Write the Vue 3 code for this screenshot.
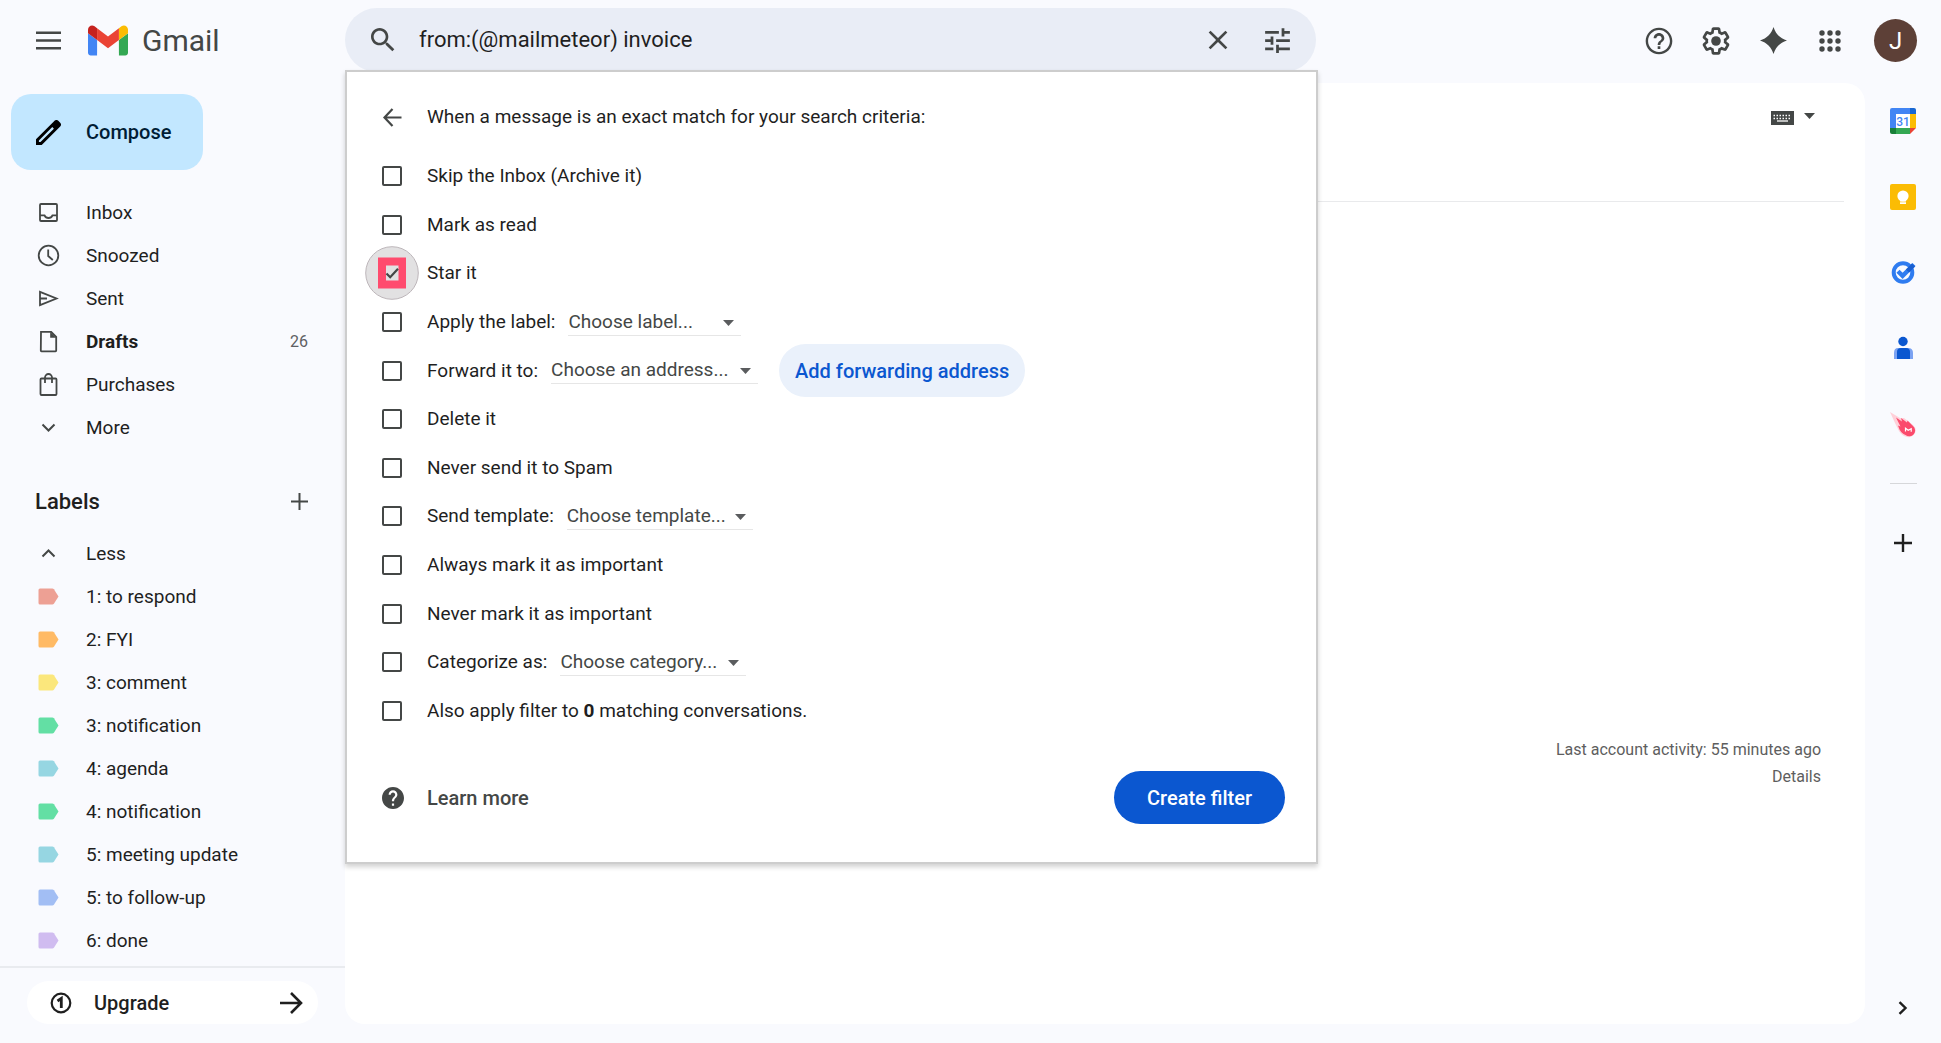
<script setup>
import { ref } from 'vue'

const query = ref('from:(@mailmeteor) invoice')

const folders = [
  { name: 'Inbox', icon: 'inbox' },
  { name: 'Snoozed', icon: 'clock' },
  { name: 'Sent', icon: 'sent' },
  { name: 'Drafts', icon: 'draft', count: 26 },
  { name: 'Purchases', icon: 'bag' },
  { name: 'More', icon: 'down' },
]

const labels = [
  { name: '1: to respond', color: '#eda094' },
  { name: '2: FYI', color: '#ffba65' },
  { name: '3: comment', color: '#fbe77c' },
  { name: '3: notification', color: '#63dfa4' },
  { name: '4: agenda', color: '#96d6e2' },
  { name: '4: notification', color: '#63dfa4' },
  { name: '5: meeting update', color: '#96d6e2' },
  { name: '5: to follow-up', color: '#a2bef4' },
  { name: '6: done', color: '#d0bcf0' },
]

const actions = ref([
  { id: 'archive', text: 'Skip the Inbox (Archive it)', on: false },
  { id: 'read', text: 'Mark as read', on: false },
  { id: 'star', text: 'Star it', on: true },
  { id: 'label', text: 'Apply the label:', choice: 'Choose label...', size: 'small', on: false },
  { id: 'forward', text: 'Forward it to:', choice: 'Choose an address...', size: 'large', on: false },
  { id: 'delete', text: 'Delete it', on: false },
  { id: 'spam', text: 'Never send it to Spam', on: false },
  { id: 'template', text: 'Send template:', choice: 'Choose template...', size: 'medium', on: false },
  { id: 'important', text: 'Always mark it as important', on: false },
  { id: 'unimportant', text: 'Never mark it as important', on: false },
  { id: 'category', text: 'Categorize as:', choice: 'Choose category...', size: 'medium', on: false },
  { id: 'apply', text: 'Also apply filter to ', on: false },
])
</script>

<template>
  <div class="app">
    <header class="top">
      <div class="brand">
        <button class="plain" aria-label="Main menu">
          <svg width="25" height="25" viewBox="0 0 25 25" stroke="#444746" stroke-width="2.6"><path d="M0 4.7h25M0 12.5h25M0 20.3h25" /></svg>
        </button>
        <a class="logo" href="#">
          <svg width="40" height="31" viewBox="52 42 88 66">
            <path fill="#4285f4" d="M58 108h14V74L52 59v43c0 3.32 2.69 6 6 6" />
            <path fill="#34a853" d="M120 108h14c3.32 0 6-2.69 6-6V59l-20 15" />
            <path fill="#fbbc04" d="M120 48v26l20-15v-8c0-7.42-8.47-11.65-14.4-7.2" />
            <path fill="#ea4335" d="M72 74V48l24 18 24-18v26L96 92" />
            <path fill="#c5221f" d="M52 51v8l20 15V48l-5.6-4.2c-5.94-4.45-14.4-.22-14.4 7.2" />
          </svg>
          <span>Gmail</span>
        </a>
      </div>

      <div class="search-area">
        <form class="search" @submit.prevent>
          <button class="plain" aria-label="Search">
            <svg width="32" height="32" viewBox="0 0 24 24" fill="#444746"><path d="M15.5 14h-.79l-.28-.27C15.41 12.59 16 11.11 16 9.5 16 5.91 13.09 3 9.5 3S3 5.91 3 9.5 5.91 16 9.5 16c1.61 0 3.09-.59 4.23-1.57l.27.28v.79l5 4.99L20.49 19l-4.99-5zm-6 0C7.01 14 5 11.99 5 9.5S7.01 5 9.5 5 14 7.01 14 9.5 11.99 14 9.5 14z" /></svg>
          </button>
          <input v-model="query" type="text" aria-label="Search mail" />
          <button class="plain" type="button" aria-label="Clear search">
            <svg width="32" height="32" viewBox="0 0 24 24" fill="#444746"><path d="M19 6.41 17.59 5 12 10.59 6.41 5 5 6.41 10.59 12 5 17.59 6.41 19 12 13.41 17.59 19 19 17.59 13.41 12z" /></svg>
          </button>
          <button class="plain" type="button" aria-label="Show search options">
            <svg width="33" height="33" viewBox="0 0 24 24" fill="#444746"><path d="M3 17v2h6v-2H3zM3 5v2h10V5H3zm10 16v-2h8v-2h-8v-2h-2v6h2zM7 9v2H3v2h4v2h2V9H7zm14 4v-2H11v2h10zm-6-4h2V7h4V5h-4V3h-2v6z" /></svg>
          </button>
        </form>

        <section class="panel">
          <div class="panel-head">
            <button class="plain" aria-label="Back">
              <svg width="21" height="21" viewBox="0 0 21 21" fill="none" stroke="#444746" stroke-width="2.2"><path d="M19.5 10.5H3M10.5 2 2.5 10.5 10.5 19" /></svg>
            </button>
            <span>When a message is an exact match for your search criteria:</span>
          </div>

          <div class="actions">
            <div v-for="a in actions" :key="a.id" class="action">
              <span class="tick">
                <input :id="a.id" v-model="a.on" type="checkbox" />
                <svg v-if="a.on" class="ring" width="54" height="54" viewBox="0 0 54 54">
                  <circle cx="27" cy="27" r="26.3" fill="#e2e1e2" stroke="#bdb6ba" />
                  <path fill="#ff4b6e" d="M13 11.5h28v31H13z" />
                  <path fill="#e2e1e2" d="M21 19.5h12.5v15H21z" />
                  <path d="m21.5 27.5 3.7 3.7 7.8-8.4" fill="none" stroke="#444746" stroke-width="2.2" />
                </svg>
              </span>
              <label :for="a.id">{{ a.text }}<template v-if="a.id === 'apply'"><b>0</b> matching conversations.</template></label>
              <span v-if="a.choice" class="choice" :class="a.size">
                <select :aria-label="a.text"><option>{{ a.choice }}</option></select>
                <svg width="11" height="6" viewBox="0 0 11 6" fill="#5a5c5e"><path d="M0 0h11L5.5 6z" /></svg>
              </span>
              <button v-if="a.id === 'forward'" class="pill tonal">Add forwarding address</button>
            </div>
          </div>

          <div class="panel-foot">
            <svg width="22" height="22" viewBox="2 2 20 20" fill="#444746"><path d="M12 2C6.48 2 2 6.48 2 12s4.48 10 10 10 10-4.48 10-10S17.52 2 12 2zm1 17h-2v-2h2v2zm2.07-7.75-.9.92C13.45 12.9 13 13.5 13 15h-2v-.5c0-1.1.45-2.1 1.17-2.83l1.24-1.26c.37-.36.59-.86.59-1.41 0-1.1-.9-2-2-2s-2 .9-2 2H8c0-2.21 1.79-4 4-4s4 1.79 4 4c0 .88-.36 1.68-.93 2.25z" /></svg>
            <a href="#">Learn more</a>
            <button class="pill filled">Create filter</button>
          </div>
        </section>
      </div>

      <div class="tools">
        <button class="plain" aria-label="Support">
          <svg width="32" height="32" viewBox="0 0 24 24" fill="#444746"><path d="M11 18h2v-2h-2v2zm1-16C6.48 2 2 6.48 2 12s4.48 10 10 10 10-4.48 10-10S17.52 2 12 2zm0 18.2c-4.5 0-8.2-3.7-8.2-8.2S7.5 3.8 12 3.8s8.2 3.7 8.2 8.2-3.7 8.2-8.2 8.2zM12 6c-2.21 0-4 1.79-4 4h2c0-1.1.9-2 2-2s2 .9 2 2c0 2-3 1.75-3 5h2c0-2.25 3-2.5 3-5 0-2.21-1.79-4-4-4z" /></svg>
        </button>
        <button class="plain" aria-label="Settings">
          <svg width="32" height="32" viewBox="0 0 24 24" fill="#444746"><path d="M13.85 22.25h-3.7c-.74 0-1.36-.54-1.45-1.27l-.27-1.89c-.27-.14-.53-.29-.79-.46l-1.8.72c-.7.26-1.47-.03-1.81-.65L2.2 15.53c-.35-.66-.2-1.44.36-1.88l1.53-1.19c-.01-.15-.02-.3-.02-.46 0-.15.01-.31.02-.46l-1.52-1.19c-.59-.45-.74-1.26-.37-1.88l1.85-3.19c.34-.62 1.11-.9 1.79-.63l1.81.73c.26-.17.52-.32.78-.46l.27-1.91c.09-.7.71-1.25 1.44-1.25h3.7c.74 0 1.36.54 1.45 1.27l.27 1.89c.27.14.53.29.79.46l1.8-.72c.71-.26 1.48.03 1.82.65l1.84 3.18c.36.66.2 1.44-.36 1.88l-1.52 1.19c.01.15.02.3.02.46s-.01.31-.02.46l1.52 1.19c.56.45.72 1.23.37 1.86l-1.86 3.22c-.34.62-1.11.9-1.8.63l-1.8-.72c-.26.17-.52.32-.78.46l-.27 1.91c-.1.68-.72 1.22-1.46 1.22zm-3.23-2h2.76l.37-2.55.53-.22c.44-.18.88-.44 1.34-.78l.45-.34 2.38.96 1.38-2.4-2.03-1.58.07-.56c.03-.26.06-.51.06-.78s-.03-.53-.06-.78l-.07-.56 2.03-1.58-1.39-2.4-2.39.96-.45-.35c-.42-.32-.87-.58-1.33-.77l-.52-.22-.37-2.55h-2.76l-.37 2.55-.53.21c-.44.19-.88.44-1.34.79l-.45.33-2.38-.95-1.39 2.39 2.03 1.58-.07.56a7 7 0 0 0-.06.79c0 .26.02.53.06.78l.07.56-2.03 1.58 1.38 2.4 2.39-.96.45.35c.43.33.86.58 1.33.77l.53.22.38 2.55z" /><circle cx="12" cy="12" r="3.6" /></svg>
        </button>
        <button class="plain" aria-label="Gemini">
          <svg width="27" height="27" viewBox="0 0 27 27" fill="#444746"><path d="M13.5 0C15.7 7 20 11.3 27 13.5 20 15.7 15.7 20 13.5 27 11.3 20 7 15.7 0 13.5 7 11.3 11.3 7 13.5 0z" /></svg>
        </button>
        <button class="plain" aria-label="Google apps">
          <svg width="22" height="22" viewBox="0 0 22 22" fill="#444746">
            <template v-for="y in 3" :key="y"><circle v-for="x in 3" :key="x" :cx="x * 8 - 5" :cy="y * 8 - 5" r="2.7" /></template>
          </svg>
        </button>
        <button class="avatar" aria-label="Account">J</button>
      </div>
    </header>

    <div class="body">
      <aside class="side">
        <button class="compose">
          <svg width="25" height="25" viewBox="0 0 25 25"><path fill-rule="evenodd" d="M0 19.3 17.6 1.7l.9-.9c1.1-1.1 2.7-1.1 3.8 0l1.9 1.9c1.1 1.1 1.1 2.7 0 3.8L5.7 25H0zM2.9 20.5v1.6h1.6L17.9 8.7l-1.6-1.6z" /></svg>
          <span>Compose</span>
        </button>

        <nav class="folders" aria-label="Mailboxes">
          <a v-for="f in folders" :key="f.name" href="#" class="item" :class="{ strong: f.count }">
            <svg width="25" height="25" viewBox="0 0 25 25" fill="none" stroke="#444746" stroke-width="1.8">
              <template v-if="f.icon === 'inbox'"><rect x="4" y="4" width="17" height="17" rx="1" /><path d="M4 15.3h4.5c.8 1.8 2 2.7 4 2.7s3.2-.9 4-2.7H21" /></template>
              <template v-else-if="f.icon === 'clock'"><circle cx="12.5" cy="12.5" r="9.8" /><path d="M12.2 6.5V13l4.6 4" /></template>
              <path v-else-if="f.icon === 'sent'" d="M4 5.8 20.5 12.5 4 19.2zM4 12.5h7" />
              <template v-else-if="f.icon === 'draft'"><path d="M5 2.8h10.2l5 5V21.6q0 .7-.7.7h-14q-.7 0-.7-.7z" /><path d="M14.2 2.8v6h6z" fill="#444746" stroke="none" /></template>
              <template v-else-if="f.icon === 'bag'"><rect x="4.5" y="6.5" width="16" height="16.5" rx="1" /><path d="M9 11V5.5a3.5 3.5 0 0 1 7 0V11" /></template>
              <path v-else d="m6.5 9.5 6 6 6-6" stroke-width="2" />
            </svg>
            <span>{{ f.name }}</span>
            <span v-if="f.count" class="count">{{ f.count }}</span>
          </a>
        </nav>

        <div class="labels-head">
          <h2>Labels</h2>
          <button class="plain" aria-label="Create new label">
            <svg width="17" height="17" viewBox="0 0 17 17" stroke="#444746" stroke-width="2"><path d="M8.5 0v17M0 8.5h17" /></svg>
          </button>
        </div>

        <nav aria-label="Labels">
          <a href="#" class="item">
            <svg width="25" height="25" viewBox="0 0 25 25" fill="none" stroke="#444746" stroke-width="2"><path d="m6.5 15.5 6-6 6 6" /></svg>
            <span>Less</span>
          </a>
          <a v-for="l in labels" :key="l.name" href="#" class="item">
            <svg width="25" height="25" viewBox="0 0 25 25" :fill="l.color"><path d="M4 4.5h12.3q1 0 1.6.8l4.6 7.2-4.6 7.2q-.6.8-1.6.8H4q-1.5 0-1.5-1.5V6q0-1.5 1.5-1.5z" /></svg>
            <span>{{ l.name }}</span>
          </a>
        </nav>

        <div class="upgrade-area">
          <button class="upgrade">
            <svg width="22" height="22" viewBox="0 0 22 22" fill="none" stroke="#1f1f1f"><circle cx="11" cy="11" r="9.3" stroke-width="2.2" /><path d="m7.5 9 3.8-2.6V16" stroke-width="2.8" /></svg>
            <span>Upgrade</span>
            <svg width="23" height="22" viewBox="0 0 23 22" fill="none" stroke="#1f1f1f" stroke-width="2.6"><path d="M0 11h21M11 1l10 10-10 10" /></svg>
          </button>
        </div>
      </aside>

      <main class="mail">
        <div class="toolbar">
          <button class="plain keyboard" aria-label="Select input tool">
            <svg width="23" height="14" viewBox="0 0 23 14"><path fill="#444746" d="M0 0h23v14H0z" /><path d="M2.5 4.5h18M2.5 7.5h18" stroke="#fff" stroke-width="1.3" stroke-dasharray="1.5 1.5" /><path d="M6 10h11" stroke="#fff" stroke-width="1.3" /></svg>
            <svg class="caret" width="11" height="6" viewBox="0 0 11 6" fill="#444746"><path d="M0 0h11L5.5 6z" /></svg>
          </button>
        </div>
        <footer class="activity">
          <span>Last account activity: 55 minutes ago</span>
          <a href="#">Details</a>
        </footer>
      </main>

      <aside class="rail">
        <button class="plain" aria-label="Calendar">
          <svg width="26" height="26" viewBox="0 0 26 26">
            <path fill="#4285f4" d="M2 0h18v6H6v14H0V2q0-2 2-2z" /><path fill="#1967d2" d="M20 0h4q2 0 2 2v4h-6z" />
            <path fill="#fbbc04" d="M20 6h6v14h-6z" /><path fill="#34a853" d="M6 20h14v6H6z" />
            <path fill="#188038" d="M0 20h6v6H2q-2 0-2-2z" /><path fill="#ea4335" d="M20 20h6l-6 6z" /><path fill="#fff" d="M6 6h14v14H6z" />
            <text x="13" y="17.5" text-anchor="middle" font-size="12" font-weight="500" fill="#4285f4">31</text>
          </svg>
        </button>
        <button class="plain" aria-label="Keep">
          <svg width="26" height="26" viewBox="0 0 26 26"><rect width="26" height="26" rx="2" fill="#fbbc04" /><circle cx="13" cy="12" r="5.6" fill="#fff" /><path fill="#fff" d="M10 15h6v2.5h-6zM10 18.3h6v1.7h-6z" /></svg>
        </button>
        <button class="plain" aria-label="Tasks">
          <svg width="26" height="26" viewBox="0 0 26 26" fill="none"><circle cx="13" cy="12.5" r="9.3" stroke="#2f7cf0" stroke-width="4" /><path d="m8 11.3 4.6 4.6L24 4.5" stroke="#2f7cf0" stroke-width="4.4" /><path d="m17.5 11 6-6" stroke="#1a5fd0" stroke-width="4.4" /></svg>
        </button>
        <button class="plain" aria-label="Contacts">
          <svg width="26" height="26" viewBox="0 0 26 26"><circle cx="13" cy="5.5" r="4.7" fill="#0b57d0" /><path fill="#7ba2f2" d="M8 12h10q5 0 5 5v6H4v-6q0-5 4-5z" /><path fill="#0b57d0" d="M11 12h5q4 0 4 4v7H7v-7q0-4 4-4z" /></svg>
        </button>
        <button class="plain" aria-label="Mailmeteor">
          <svg width="26" height="26" viewBox="0 0 26 26"><path fill="#ffd0d9" d="M0 0 10 6l4 0 9 7q4 4 2 8-3 5-8 4-5-1-8-6L5 11z" /><path fill="#fb4a6c" d="M6 5.5l6 4-1-3.5 6 4.5.5-2 5.5 5.5a5.8 5.8 0 0 1-7.500 9c-3-1-4.5-3-6-5.500l-1.500-4 2.500 1z" /><path d="M15.5 19.5v-3.3l2.7 2 3-1.5v3" fill="none" stroke="#fff" stroke-width="1.2" /></svg>
        </button>
        <hr />
        <button class="plain" aria-label="Get add-ons">
          <svg width="18" height="18" viewBox="0 0 18 18" stroke="#1f1f1f" stroke-width="2.4"><path d="M9 0v18M0 9h18" /></svg>
        </button>
        <button class="plain last" aria-label="Hide side panel">
          <svg width="10" height="14" viewBox="0 0 10 14" fill="none" stroke="#1f1f1f" stroke-width="2.4"><path d="m1.5 1.2 6 5.800-6 5.800" /></svg>
        </button>
      </aside>
    </div>
  </div>
</template>

<style>
body {
  margin: 0;
  background: #f9fafe;
}
</style>

<style scoped>
.app {
  display: flex;
  flex-direction: column;
  min-height: 100vh;
  background: #f9fafe;
  color: #1f1f1f;
  font-family: Roboto, "Liberation Sans", sans-serif;
  font-size: 19px;
  line-height: 24px;
}
.app *,
.app *::before {
  box-sizing: border-box;
}
svg {
  display: block;
  flex: none;
}
button,
input,
select {
  font: inherit;
  color: inherit;
}
button {
  cursor: pointer;
}
a {
  color: inherit;
  text-decoration: none;
}
.plain {
  display: flex;
  align-items: center;
  justify-content: center;
  padding: 0;
  border: 0;
  background: none;
}

/* header */
.top {
  display: flex;
  height: 83px;
}
.brand {
  display: flex;
  align-items: center;
  gap: 27px;
  flex: none;
  width: 345px;
  height: 81px;
  padding-left: 36px;
}
.logo {
  display: flex;
  align-items: center;
  gap: 14px;
  color: #444746;
  font-size: 30px;
  line-height: 36px;
}
.search-area {
  position: relative;
  flex: 0 1 971px;
  padding-top: 8px;
}
.search {
  display: flex;
  align-items: center;
  height: 64px;
  padding: 0 22px;
  border-radius: 32px;
  background: #e9edf6;
}
.search input {
  flex: 1;
  min-width: 0;
  margin: 0 20px;
  padding: 0;
  border: 0;
  outline: 0;
  background: none;
  font-size: 22px;
}
.search .plain + .plain {
  margin-left: 27px;
}
.tools {
  display: flex;
  align-items: center;
  gap: 25px;
  height: 81px;
  margin-left: auto;
  padding: 0 24px 0 32px;
}
.tools .plain {
  width: 32px;
}
.avatar {
  width: 43px;
  height: 43px;
  margin-left: 3px;
  padding: 0;
  border: 0;
  border-radius: 50%;
  background: #5d4037;
  color: #fff;
  font-size: 24px;
}

/* filter panel */
.panel {
  position: absolute;
  z-index: 2;
  top: 70px;
  left: 0;
  right: -2px;
  padding: 22px 31px 38px 35px;
  border: 2px solid #cdcdcd;
  background: #fff;
  box-shadow: 0 3px 5px rgba(0, 0, 0, 0.18);
}
.panel-head,
.panel-foot,
.action {
  display: flex;
  align-items: center;
}
.panel-head {
  gap: 24px;
  height: 46px;
  margin-bottom: 12px;
}
.actions {
  display: grid;
  grid-auto-rows: 1fr;
  min-height: 583px;
}
.tick {
  position: relative;
  display: flex;
  margin-right: 25px;
}
.tick input {
  appearance: none;
  width: 20px;
  height: 20px;
  margin: 0;
  border: 2px solid #444746;
  border-radius: 2px;
}
.ring {
  position: absolute;
  top: 50%;
  left: 50%;
  margin: -27px;
  pointer-events: none;
}
.choice {
  position: relative;
  margin-left: 13px;
  color: #444746;
}
.choice select {
  display: block;
  width: 100%;
  height: 27px;
  padding: 0;
  border: 0;
  border-bottom: 1px solid #e6e6e6;
  border-radius: 0;
  appearance: none;
  background: none;
}
.choice svg {
  position: absolute;
  top: 11px;
  right: 7px;
  pointer-events: none;
}
.small {
  width: 173px;
}
.medium {
  width: 186px;
}
.large {
  width: 207px;
}
.pill {
  height: 53px;
  border: 0;
  border-radius: 27px;
  font-size: 20px;
  font-weight: 500;
}
.tonal {
  margin: -4px 0 -4px 21px;
  padding: 0 16px;
  background: #eaf1fb;
  color: #0b57d0;
}
.filled {
  margin-left: auto;
  padding: 0 33px;
  background: #0b57d0;
  color: #fff;
}
.panel-foot {
  gap: 23px;
  margin-top: 36px;
  color: #444746;
  font-size: 20px;
  font-weight: 500;
}

/* page */
.body {
  display: flex;
  flex: 1;
}
.side {
  display: flex;
  flex-direction: column;
  flex: none;
  width: 345px;
}
.compose {
  display: flex;
  align-items: center;
  align-self: flex-start;
  gap: 25px;
  height: 76px;
  margin: 11px 0 0 11px;
  padding: 0 32px 0 25px;
  border: 0;
  border-radius: 20px;
  background: #c2e7ff;
  color: #001d35;
  font-size: 20px;
  font-weight: 500;
}
.folders {
  margin-top: 21px;
}
.item {
  display: flex;
  align-items: center;
  gap: 25px;
  height: 43px;
  padding: 0 37px 0 36px;
}
.strong {
  font-weight: 700;
}
.count {
  margin-left: auto;
  color: #5e6063;
  font-size: 16px;
  font-weight: 400;
}
.labels-head {
  display: flex;
  align-items: center;
  justify-content: space-between;
  height: 43px;
  margin: 31px 0 9px;
  padding: 0 37px 0 35px;
}
.labels-head h2 {
  margin: 0;
  font-size: 22px;
  font-weight: 500;
}
.upgrade-area {
  margin-top: auto;
  padding: 13px 27px 19px;
  border-top: 2px solid #e9ebef;
}
.upgrade {
  display: flex;
  align-items: center;
  gap: 22px;
  width: 100%;
  height: 43px;
  padding: 0 15px 0 23px;
  border: 0;
  border-radius: 22px;
  background: #fff;
  font-size: 20px;
  font-weight: 500;
}
.upgrade svg:last-child {
  margin-left: auto;
}
.mail {
  flex: 1;
  min-width: 0;
  margin-bottom: 19px;
  border-radius: 20px;
  background: #fff;
}
.toolbar {
  display: flex;
  justify-content: flex-end;
  align-items: flex-start;
  height: 119px;
  margin: 0 21px;
  padding: 28px 29px 0 0;
  border-bottom: 1px solid #e9eaec;
}
.keyboard {
  align-items: flex-start;
  gap: 10px;
}
.caret {
  margin-top: 2px;
}
.activity {
  display: flex;
  flex-direction: column;
  align-items: flex-end;
  padding: 534px 44px 0 0;
  color: #5e5e5e;
  font-size: 16px;
  line-height: 27px;
}
.rail {
  display: flex;
  flex-direction: column;
  align-items: center;
  gap: 50px;
  flex: none;
  width: 76px;
  padding-top: 25px;
}
.rail hr {
  width: 27px;
  margin: -5px 0 0;
  border: 0;
  border-top: 1px solid #d6d7da;
}
.last {
  margin: auto 0 28px;
}
</style>
